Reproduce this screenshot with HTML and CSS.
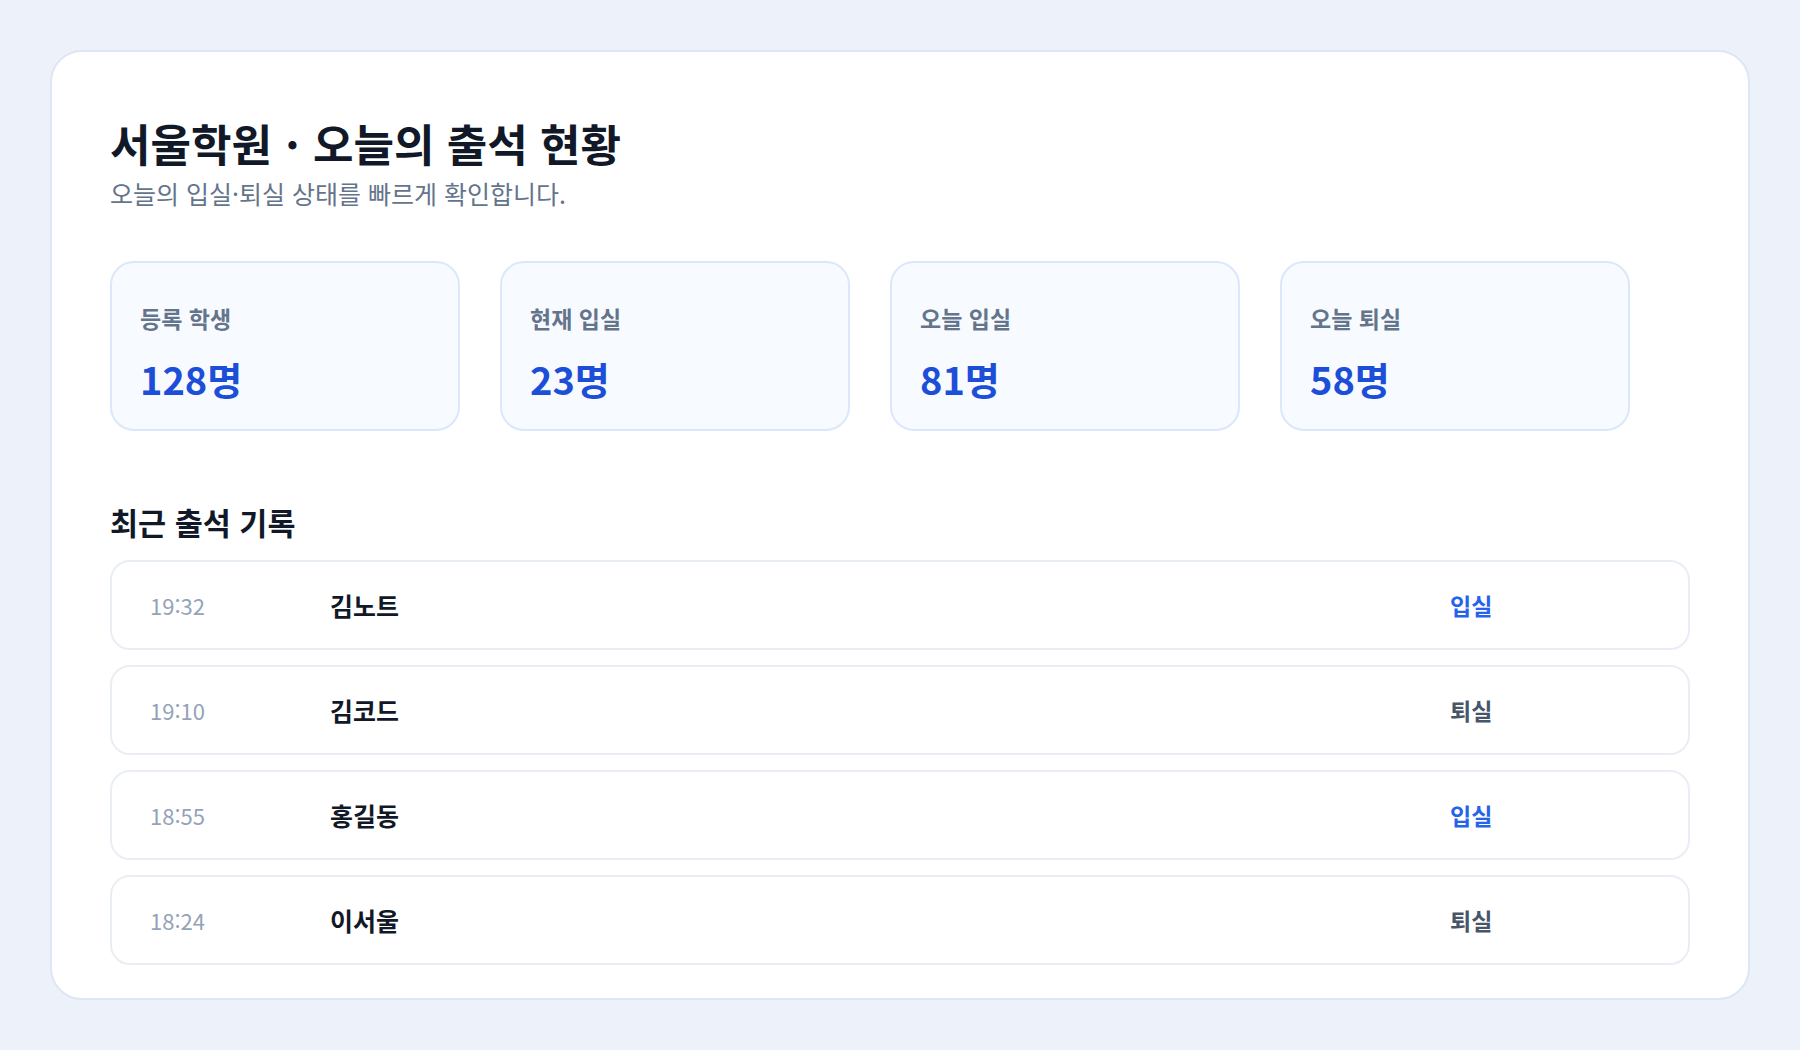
FILE: index.html
```html
<!DOCTYPE html>
<html lang="ko">
<head>
    <meta charset="UTF-8">
    <title>서울학원 출석 현황</title>
    <link rel="stylesheet" href="styles.css">
</head>
<body>
<div class="board">
    <h1 class="board-title">서울학원 <span class="dot">·</span> 오늘의 출석 현황</h1>
    <p class="board-desc">오늘의 입실·퇴실 상태를 빠르게 확인합니다.</p>

    <ul class="stats">
        <li class="stat">
            <p class="stat-label">등록 학생</p>
            <p class="stat-value">128명</p>
        </li>
        <li class="stat">
            <p class="stat-label">현재 입실</p>
            <p class="stat-value">23명</p>
        </li>
        <li class="stat">
            <p class="stat-label">오늘 입실</p>
            <p class="stat-value">81명</p>
        </li>
        <li class="stat">
            <p class="stat-label">오늘 퇴실</p>
            <p class="stat-value">58명</p>
        </li>
    </ul>

    <h2 class="section-title">최근 출석 기록</h2>
    <ul class="logs">
        <li class="log">
            <span class="log-time">19:32</span>
            <span class="log-name">김노트</span>
            <span class="log-state in">입실</span>
        </li>
        <li class="log">
            <span class="log-time">19:10</span>
            <span class="log-name">김코드</span>
            <span class="log-state out">퇴실</span>
        </li>
        <li class="log">
            <span class="log-time">18:55</span>
            <span class="log-name">홍길동</span>
            <span class="log-state in">입실</span>
        </li>
        <li class="log">
            <span class="log-time">18:24</span>
            <span class="log-name">이서울</span>
            <span class="log-state out">퇴실</span>
        </li>
    </ul>
</div>
</body>
</html>
```

FILE: styles.css
```css
*{
    margin: 0;
    padding: 0;
    box-sizing: border-box;
}
ul{
    list-style-type: none;
}
body{
    padding: 50px;
    background: #edf2fa;
    font-family: "Noto Sans CJK KR", "Noto Sans", sans-serif;
    color: #111827;
}
.board{
    height: 950px;
    padding: 63px 58px 0;
    background: #fff;
    border: 2px solid #dde6f2;
    border-radius: 32px;
}
.board-title{
    font-size: 44px;
    font-weight: 700;
    line-height: 1.3;
    color: #111827;
}
.board-title .dot{
    margin: 0 1px;
}
.board-desc{
    margin-top: 4px;
    font-size: 25px;
    line-height: 1.4;
    color: #64748b;
}
.stats{
    display: grid;
    grid-template-columns: repeat(4, 350px);
    gap: 40px;
    margin-top: 50px;
}
.stat{
    height: 170px;
    padding: 38px 28px 0;
    background: #f7fbff;
    border: 2px solid #dbe7fa;
    border-radius: 24px;
}
.stat-label{
    font-size: 23px;
    font-weight: 700;
    line-height: 1.5;
    color: #64748b;
}
.stat-value{
    margin-top: 20px;
    font-size: 38px;
    font-weight: 700;
    line-height: 1.2;
    color: #1d4ed8;
}
.section-title{
    margin-top: 70px;
    font-size: 30.5px;
    font-weight: 700;
    line-height: 1.4;
}
.logs{
    display: flex;
    flex-direction: column;
    gap: 15px;
    margin-top: 16px;
}
.log{
    display: grid;
    grid-template-columns: 180px 1fr 200px;
    align-items: center;
    height: 90px;
    padding: 0 38px;
    border: 2px solid #e9eef5;
    border-radius: 20px;
}
.log-time{
    font-size: 22px;
    color: #94a3b8;
}
.log-name{
    font-size: 25px;
    font-weight: 700;
    color: #111827;
}
.log-state{
    font-size: 23px;
    font-weight: 700;
}
.log-state.in{
    color: #2563eb;
}
.log-state.out{
    color: #475569;
}
```
